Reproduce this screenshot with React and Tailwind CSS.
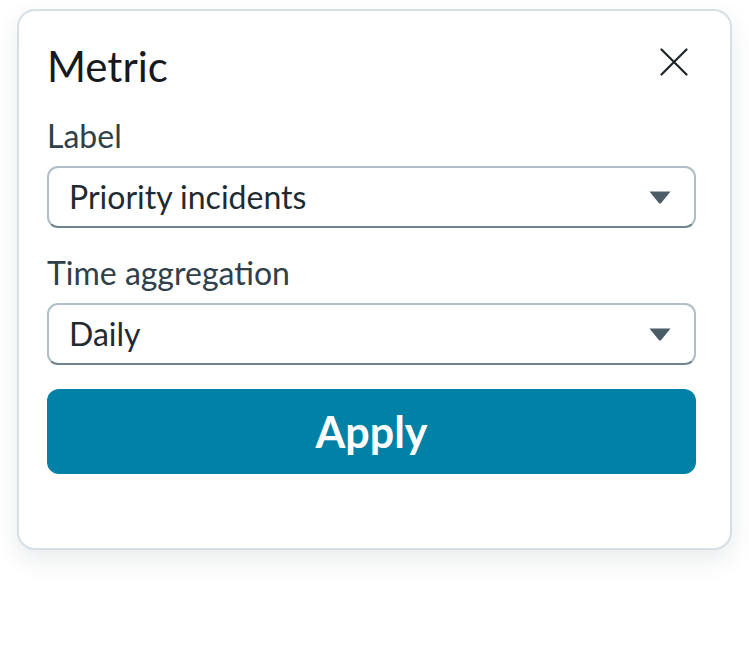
import React from 'react';

function Caret() {
    return (
        <svg width="22" height="13" viewBox="0 0 22 13" className="shrink-0">
            <path d="M0.5 0.5 H21.5 L12.2 12 Q11 13.2 9.8 12 Z" fill="#4b5d66" />
        </svg>
    );
}

function Select({ value }) {
    return (
        <div className="flex items-center justify-between h-[62px] rounded-[11px] border-2 border-[#aebfc7] border-b-[#6f848e] bg-white pl-[20px] pr-[23px]">
            <span className="text-[32px] leading-[38px] text-[#1f2b31]">{value}</span>
            <Caret />
        </div>
    );
}

export default function App() {
    return (
        <div className="min-h-screen bg-white pt-[9px] pl-[17px]" style={{ fontFamily: 'Lato, "Noto Sans", sans-serif' }}>
            <div className="w-[715px] h-[541px] rounded-[18px] border-2 border-[#d6dfe5] bg-white shadow-[0_10px_24px_rgba(40,60,70,0.10)] pt-[30px] pl-[28px] pr-[34px]">
                {/* header */}
                <div className="flex items-start justify-between">
                    <h2 className="text-[42px] leading-[50px] text-[#161a1c]">Metric</h2>
                    <button className="mt-[7px] mr-[8px] text-[#1d2327]" title="Close">
                        <svg width="28" height="28" viewBox="0 0 28 28">
                            <path d="M1.5 1.5 L26.5 26.5 M26.5 1.5 L1.5 26.5" stroke="currentColor" strokeWidth="2.2" strokeLinecap="round" />
                        </svg>
                    </button>
                </div>

                <div className="mt-[26px] text-[32px] leading-[38px] text-[#2f4049]">Label</div>
                <div className="mt-[11px]">
                    <Select value="Priority incidents" />
                </div>

                <div className="mt-[26px] text-[32px] leading-[38px] text-[#2f4049]">Time aggregation</div>
                <div className="mt-[11px]">
                    <Select value="Daily" />
                </div>

                <button className="mt-[24px] w-full h-[85px] rounded-[12px] bg-[#0081a5] text-white text-[43px] font-bold leading-none">
                    Apply
                </button>
            </div>
        </div>
    );
}
